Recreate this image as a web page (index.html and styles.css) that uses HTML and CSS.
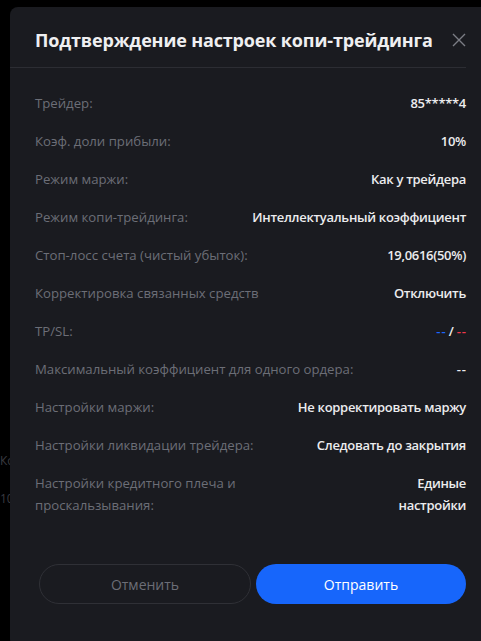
FILE: index.html
```html
<!DOCTYPE html>
<html lang="ru">
<head>
    <meta charset="UTF-8">
    <meta name="viewport" content="width=device-width, initial-scale=1.0">
    <title>Подтверждение настроек копи-трейдинга</title>
    <link rel="stylesheet" href="styles.css">
</head>
<body>
    <div class="backdrop">
        <span class="bg-text bg-text-1">Ко</span>
        <span class="bg-text bg-text-2">10</span>
    </div>

    <div class="modal">
        <!-- Header -->
        <div class="modal-header">
            <h1 class="modal-title">Подтверждение настроек копи-трейдинга</h1>
            <button class="close-button" aria-label="Закрыть">
                <svg width="14" height="14" viewBox="0 0 14 14">
                    <path d="M1 1L13 13M13 1L1 13" stroke="#7b7d85" stroke-width="1.4" fill="none"/>
                </svg>
            </button>
        </div>

        <!-- Settings list -->
        <div class="modal-body">
            <div class="row">
                <span class="label">Трейдер:</span>
                <span class="value">85*****4</span>
            </div>
            <div class="row">
                <span class="label">Коэф. доли прибыли:</span>
                <span class="value">10%</span>
            </div>
            <div class="row">
                <span class="label">Режим маржи:</span>
                <span class="value">Как у трейдера</span>
            </div>
            <div class="row">
                <span class="label">Режим копи-трейдинга:</span>
                <span class="value">Интеллектуальный коэффициент</span>
            </div>
            <div class="row">
                <span class="label">Стоп-лосс счета (чистый убыток):</span>
                <span class="value">19,0616(50%)</span>
            </div>
            <div class="row">
                <span class="label">Корректировка связанных средств</span>
                <span class="value">Отключить</span>
            </div>
            <div class="row">
                <span class="label">TP/SL:</span>
                <span class="value"><span class="dash tp">--</span> / <span class="dash sl">--</span></span>
            </div>
            <div class="row">
                <span class="label">Максимальный коэффициент для одного ордера:</span>
                <span class="value"><span class="dash">--</span></span>
            </div>
            <div class="row">
                <span class="label">Настройки маржи:</span>
                <span class="value">Не корректировать маржу</span>
            </div>
            <div class="row">
                <span class="label">Настройки ликвидации трейдера:</span>
                <span class="value">Следовать до закрытия</span>
            </div>
            <div class="row">
                <span class="label label-wrap">Настройки кредитного плеча и проскальзывания:</span>
                <span class="value value-wrap">Единые настройки</span>
            </div>
        </div>

        <!-- Actions -->
        <div class="modal-footer">
            <button class="btn btn-cancel">Отменить</button>
            <button class="btn btn-submit">Отправить</button>
        </div>
    </div>
</body>
</html>
```

FILE: styles.css
```css
/* Global styles */
body {
    margin: 0;
    padding: 0;
    background-color: #000;
    font-family: "Open Sans", "Noto Sans", Arial, sans-serif;
    height: 641px;
    overflow: hidden;
    position: relative;
}

/* Faint page content behind the modal */
.backdrop {
    position: absolute;
    inset: 0;
}

.bg-text {
    position: absolute;
    left: 0;
    font-size: 12px;
    color: #3a3b40;
}

.bg-text-1 { top: 452px; }
.bg-text-2 { top: 490px; }

/* Modal */
.modal {
    position: relative;
    margin: 7px 0 0 10px;
    width: 481px;
    height: 640px;
    background-color: #1a1b20;
    border-radius: 8px;
    box-sizing: border-box;
}

.modal-header {
    display: flex;
    align-items: center;
    justify-content: space-between;
    width: 456px;
    padding: 20px 0 14px 25px;
    box-sizing: border-box;
    border-bottom: 1px solid #2c2d33;
}

.modal-title {
    margin: 0;
    font-size: 18px;
    line-height: 26px;
    font-weight: 700;
    color: #efeff1;
    letter-spacing: -0.15px;
}

.close-button {
    background: none;
    border: none;
    padding: 0;
    width: 14px;
    height: 14px;
    display: flex;
    cursor: pointer;
}

/* Rows */
.modal-body {
    width: 456px;
    padding: 16px 0 0 25px;
    box-sizing: border-box;
}

.row {
    display: flex;
    justify-content: space-between;
    align-items: flex-start;
    gap: 16px;
    padding: 8px 0;
    font-size: 13.2px;
    line-height: 22px;
}

.label {
    color: #6c6e77;
}

.label-wrap {
    width: 210px;
}

.value {
    color: #ececee;
    font-size: 13px;
    font-weight: 600;
    letter-spacing: -0.3px;
    text-align: right;
    white-space: nowrap;
}

.value-wrap {
    white-space: normal;
    width: 80px;
}

.dash {
    letter-spacing: 1px;
    margin-right: -1px;
}

.tp { color: #1a66ff; }
.sl { color: #f0384b; }

/* Footer buttons */
.modal-footer {
    display: flex;
    gap: 5px;
    width: 456px;
    padding: 40px 0 0 29px;
    box-sizing: border-box;
}

.btn {
    flex: 1;
    height: 40px;
    border-radius: 20px;
    font-family: inherit;
    font-size: 14px;
    cursor: pointer;
}

.btn-cancel {
    background: none;
    border: 1px solid #2f3036;
    color: #6c6e77;
}

.btn-submit {
    background-color: #1766fb;
    border: none;
    color: #fff;
}
```
